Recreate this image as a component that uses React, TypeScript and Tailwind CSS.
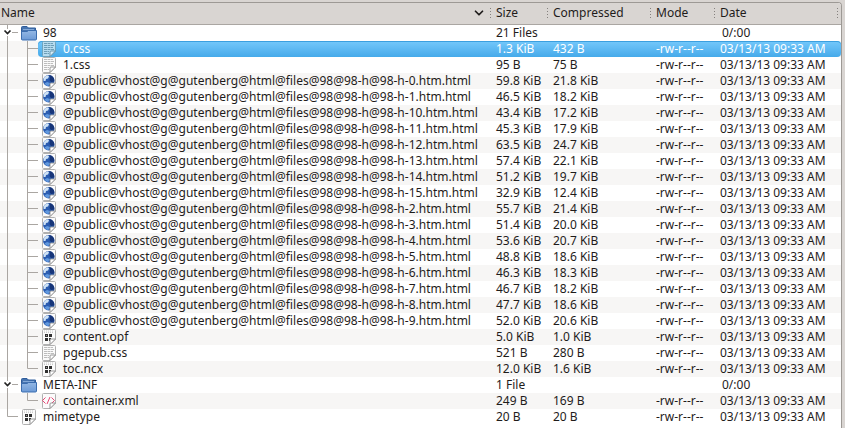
import { ChevronDown } from 'lucide-react';

type IconKind = 'folder' | 'text' | 'globe' | 'binary' | 'xml';

type Entry = {
	name: string;
	icon: IconKind;
	depth: 1 | 2;
	size: string;
	compressed?: string;
	last?: boolean;
	selected?: boolean;
};

const page = (id: number, size: string, compressed: string): Entry => ({
	name: `@public@vhost@g@gutenberg@html@files@98@98-h@98-h-${id}.htm.html`,
	icon: 'globe',
	depth: 2,
	size: `${size} KiB`,
	compressed: `${compressed} KiB`,
});

const entries: Entry[] = [
	{ name: '98', icon: 'folder', depth: 1, size: '21 Files' },
	{ name: '0.css', icon: 'text', depth: 2, size: '1.3 KiB', compressed: '432 B', selected: true },
	{ name: '1.css', icon: 'text', depth: 2, size: '95 B', compressed: '75 B' },
	page(0, '59.8', '21.8'),
	page(1, '46.5', '18.2'),
	page(10, '43.4', '17.2'),
	page(11, '45.3', '17.9'),
	page(12, '63.5', '24.7'),
	page(13, '57.4', '22.1'),
	page(14, '51.2', '19.7'),
	page(15, '32.9', '12.4'),
	page(2, '55.7', '21.4'),
	page(3, '51.4', '20.0'),
	page(4, '53.6', '20.7'),
	page(5, '48.8', '18.6'),
	page(6, '46.3', '18.3'),
	page(7, '46.7', '18.2'),
	page(8, '47.7', '18.6'),
	page(9, '52.0', '20.6'),
	{ name: 'content.opf', icon: 'binary', depth: 2, size: '5.0 KiB', compressed: '1.0 KiB' },
	{ name: 'pgepub.css', icon: 'text', depth: 2, size: '521 B', compressed: '280 B' },
	{ name: 'toc.ncx', icon: 'binary', depth: 2, size: '12.0 KiB', compressed: '1.6 KiB', last: true },
	{ name: 'META-INF', icon: 'folder', depth: 1, size: '1 File' },
	{ name: 'container.xml', icon: 'xml', depth: 2, size: '249 B', compressed: '169 B', last: true },
	{ name: 'mimetype', icon: 'binary', depth: 1, size: '20 B', compressed: '20 B', last: true },
];

const FolderIcon = () => (
	<svg className="size-4 shrink-0" viewBox="0 0 16 16" aria-hidden="true">
		<defs>
			<linearGradient id="folder" x1="0" y1="0" x2="0" y2="1">
				<stop offset="0" stopColor="#94b8e4" />
				<stop offset="1" stopColor="#6c9ad6" />
			</linearGradient>
		</defs>
		<path d="M.5 14V2.5q0-1 1-1H6L7.5 3h7v11z" fill="#4674b0" stroke="#2f5c9a" />
		<path d="M2 4.5h11" stroke="#83a9d8" />
		<path d="M.5 6.5H6L7.5 5.5h8v8.5q0 1-1 1h-13q-1 0-1-1z" fill="url(#folder)" stroke="#3b6dae" />
	</svg>
);

const FileIcon = ({ kind, selected }: { kind: IconKind; selected?: boolean }) => {
	const edge = selected ? '#6fa3bd' : '#b0b0b0';
	return (
		<svg className="size-4 shrink-0" viewBox="0 0 16 16" aria-hidden="true">
			<path
				d="M1.5 1.5q0-1 1-1h11q1 0 1 1V10l-5.5 5.5H2.5q-1 0-1-1z"
				fill={selected ? '#b7dcf0' : '#fbfbfb'}
				stroke={edge}
			/>
			{kind === 'text' && (
				<path
					d="M3 2.5h9M3 4.5h10M3 6.5h9M3 8.5h10M3 10.5h5M3 12.5h5"
					stroke={selected ? '#6e9eb7' : '#bdbdbd'}
					strokeDasharray="3 .5"
				/>
			)}
			{kind === 'globe' && (
				<>
					<circle cx="7.7" cy="7.7" r="5.7" fill="#2a5cb0" />
					<path d="M8 2a5.7 5.7 0 0 1 5.4 6.5L10 9 8.5 7 9 4.5z" fill="#173578" />
					<path d="M2.8 5Q4 2.6 7 2.2L8 3.5 7 5.5 5 6 4.5 8 2.5 8z" fill="#cfe3f6" />
					<path d="M3.5 10.5L6 9l3 1-1 2.5-2 .5z" fill="#5f97dd" />
				</>
			)}
			{kind === 'binary' && (
				<>
					<path d="M3.5 1.5v3M5.5 1.5v3M7.5 1.5v3M9.5 1.5v3M11.5 1.5v3" stroke="#cbcbcb" strokeDasharray="1 .5" />
					<path d="M4 5h3v3H4zM8 5h3v3H8zM4 9h3v3H4zM8 9h2v3H8z" fill="#303030" />
					<path d="M5 6h1v1H5zM9 10h1v1H9z" fill="#999" />
				</>
			)}
			{kind === 'xml' && (
				<path d="M4.5 4.5l-3 3 3 3M9 4l-3 7M10.5 4.5l3 3-3 3" fill="none" stroke="#e64775" />
			)}
			<path
				d="M9 15.5V11q0-1 1-1h4.5z"
				fill={selected ? '#d7edf8' : '#fff'}
				stroke={selected ? '#5c8ba3' : '#8c8c8c'}
				strokeWidth=".9"
			/>
		</svg>
	);
};

const TreeGuide = ({ entry, trunk }: { entry: Entry; trunk: boolean }) => {
	const stroke = '#aaa6a2';
	if (entry.depth === 2) {
		return (
			<svg className="w-[38px] h-4 shrink-0" aria-hidden="true">
				{trunk && <path d="M7.5 0v16" stroke={stroke} />}
				<path d={entry.last ? 'M27.5 0v7.5H38' : 'M27.5 0v16M27.5 7.5H38'} fill="none" stroke={stroke} />
			</svg>
		);
	}
	return (
		<svg className="w-[18px] h-4 shrink-0" aria-hidden="true">
			{entry.icon === 'folder' ? (
				<>
					<path d="M7.5 0v4M7.5 11v5M12 7.5h6" stroke={stroke} />
					<path d="M4.5 5.5l3 3 3-3" fill="none" stroke="#222" strokeWidth="1.7" />
				</>
			) : (
				<path d="M7.5 0v7.5H18" fill="none" stroke={stroke} />
			)}
		</svg>
	);
};

const Grip = () => (
	<svg className="w-1 h-3 shrink-0" aria-hidden="true">
		<path d="M0 1.5h1M0 4.5h1M0 7.5h1M0 10.5h1" stroke="#85817e" />
	</svg>
);

const HeaderCell = ({ label }: { label: string }) => (
	<th scope="col" className="p-0 font-normal text-left">
		<div className="flex items-center gap-0.5">
			<Grip />
			<span>{label}</span>
		</div>
	</th>
);

const selectedBg = 'bg-linear-to-b from-[#74c8fb] to-[#45aaea] shadow-[inset_0_1px_#3b9fdf] text-white';

const Row = ({ entry, trunk }: { entry: Entry; trunk: boolean }) => {
	const { name, icon, size, compressed, selected } = entry;
	const fill = selected ? selectedBg : '';
	const isFolder = icon === 'folder';
	return (
		<tr className="even:bg-[#f7f6f5]" aria-selected={!!selected}>
			<td className="p-0">
				<div className="flex h-4">
					<TreeGuide entry={entry} trunk={trunk} />
					<div className={`flex flex-1 items-center gap-1.5 pl-[3px] ${selected ? `rounded-l-sm ${fill}` : ''}`}>
						{isFolder ? <FolderIcon /> : <FileIcon kind={icon} selected={selected} />}
						<span>{name}</span>
					</div>
				</div>
			</td>
			<td className="p-0">
				<div className={`h-4 pl-1.5 ${fill}`}>{size}</div>
			</td>
			<td className="p-0">
				<div className={`h-4 pl-1.5 ${fill}`}>{compressed}</div>
			</td>
			<td className="p-0">
				<div className={`h-4 pl-1.5 ${fill}`}>{isFolder ? '' : '-rw-r--r--'}</div>
			</td>
			<td className="p-0">
				<div className={`h-4 ${isFolder ? 'pl-2' : 'pl-1.5'} ${selected ? `rounded-r-sm ${fill}` : ''}`}>
					{isFolder ? '0/:00' : '03/13/13 09:33 AM'}
				</div>
			</td>
		</tr>
	);
};

export default function App() {
	return (
		<main className="min-h-screen flex flex-col bg-[#d9d5d2] pt-0.5 pr-[3px] font-['Noto_Sans',sans-serif] text-xs leading-4 text-[#1f1c1b]">
			<div className="flex-1 rounded-tr-sm border-t border-r border-[#9d9995] bg-white overflow-hidden">
				<table className="w-full table-fixed border-collapse whitespace-nowrap">
					<colgroup>
						<col />
						<col className="w-[57px]" />
						<col className="w-[103px]" />
						<col className="w-[64px]" />
						<col className="w-[127px]" />
					</colgroup>
					<thead className="bg-[#d9d5d2]">
						<tr className="h-[21px] border-b border-[#aaa6a2]">
							<th scope="col" className="p-0 pl-px pr-1 font-normal text-left" aria-sort="ascending">
								<div className="flex items-center justify-between">
									<span>Name</span>
									<ChevronDown className="size-3.5" strokeWidth={3} />
								</div>
							</th>
							<HeaderCell label="Size" />
							<HeaderCell label="Compressed" />
							<HeaderCell label="Mode" />
							<th scope="col" className="p-0 font-normal text-left">
								<div className="flex items-center gap-0.5">
									<Grip />
									<span className="flex-1">Date</span>
									<Grip />
								</div>
							</th>
						</tr>
					</thead>
					<tbody>
						{entries.map((entry, index) => (
							<Row key={entry.name} entry={entry} trunk={index < entries.length - 1} />
						))}
					</tbody>
				</table>
			</div>
		</main>
	);
}
